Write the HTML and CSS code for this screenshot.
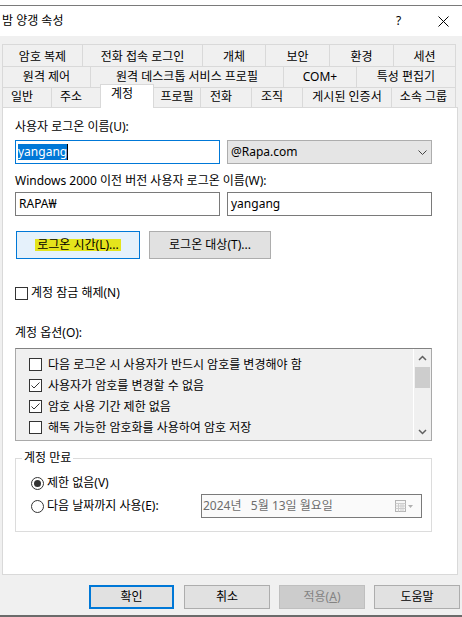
FILE: index.html
```html
<!DOCTYPE html>
<html lang="ko">
<head>
<meta charset="utf-8">
<title>밤 양갱 속성</title>
<link rel="stylesheet" href="styles.css">
</head>
<body>
<div class="win">
  <div class="topstrip"></div>
  <div class="titlebar">
    <span class="title">밤 양갱 속성</span>
    <span class="help">?</span>
    <span class="close"><svg width="11" height="11" viewBox="0 0 11 11"><path d="M0.5 0.5 L10.5 10.5 M10.5 0.5 L0.5 10.5" stroke="#000" stroke-width="1" fill="none"/></svg></span>
  </div>
  <div class="client">
    <div class="tabs">
      <div class="tabrow r1">
        <div class="tab">암호 복제</div><div class="tab">전화 접속 로그인</div><div class="tab">개체</div><div class="tab">보안</div><div class="tab">환경</div><div class="tab">세션</div>
      </div>
      <div class="tabrow r2">
        <div class="tab">원격 제어</div><div class="tab">원격 데스크톱 서비스 프로필</div><div class="tab">COM+</div><div class="tab">특성 편집기</div>
      </div>
      <div class="tabrow r3">
        <div class="tab sh">일반</div><div class="tab sh">주소</div><div class="tab sel sh">계정</div><div class="tab">프로필</div><div class="tab sh">전화</div><div class="tab sh">조직</div><div class="tab">게시된 인증서</div><div class="tab">소속 그룹</div>
      </div>
    </div>
    <div class="page">
      <div class="lbl">사용자 로그온 이름(U):</div>
      <div class="frow fa">
        <div class="field focus"><span class="seltext">yangang</span><span class="caret"></span></div>
        <div class="combo"><span>@Rapa.com</span><svg width="9" height="5" viewBox="0 0 9 5"><path d="M0.5 0.5 L4.5 4.5 L8.5 0.5" fill="none" stroke="#444" stroke-width="1"/></svg></div>
      </div>
      <div class="lbl l2">Windows 2000 이전 버전 사용자 로그온 이름(W):</div>
      <div class="frow fb">
        <div class="field">RAPA₩</div>
        <div class="field">yangang</div>
      </div>
      <div class="brow">
        <div class="btn hot w1"><span class="mark">로그온 시간(L)...</span></div>
        <div class="btn">로그온 대상(T)...</div>
      </div>
      <div class="chkrow"><span class="cb"></span><span>계정 잠금 해제(N)</span></div>
      <div class="lbl l3">계정 옵션(O):</div>
      <div class="listbox">
        <div class="items">
          <div class="item"><span class="cb"></span><span>다음 로그온 시 사용자가 반드시 암호를 변경해야 함</span></div>
          <div class="item"><span class="cb"><svg width="11" height="11" viewBox="0 0 11 11"><path d="M1.5 5.5 L4 8 L9.5 2.5" fill="none" stroke="#333" stroke-width="1"/></svg></span><span>사용자가 암호를 변경할 수 없음</span></div>
          <div class="item"><span class="cb"><svg width="11" height="11" viewBox="0 0 11 11"><path d="M1.5 5.5 L4 8 L9.5 2.5" fill="none" stroke="#333" stroke-width="1"/></svg></span><span>암호 사용 기간 제한 없음</span></div>
          <div class="item"><span class="cb"></span><span>해독 가능한 암호화를 사용하여 암호 저장</span></div>
        </div>
        <div class="vscroll">
          <span class="arr"><svg width="9" height="6" viewBox="0 0 9 6"><path d="M1 5 L4.5 1.5 L8 5" fill="none" stroke="#606060" stroke-width="1.5"/></svg></span>
          <span class="thumb"></span>
          <span class="arr dn"><svg width="9" height="6" viewBox="0 0 9 6"><path d="M1 1 L4.5 4.5 L8 1" fill="none" stroke="#606060" stroke-width="1.5"/></svg></span>
        </div>
      </div>
      <fieldset class="group">
        <legend>계정 만료</legend>
        <div class="ginner">
          <div class="radrow"><span class="rb on"></span><span>제한 없음(V)</span></div>
          <div class="radrow two"><span class="rb"></span><span>다음 날짜까지 사용(E):</span>
            <div class="dtp"><span class="dtext">2024년   5월 13일 월요일</span><svg class="cal" width="19" height="12" viewBox="0 0 19 12"><rect x="0.5" y="0.5" width="10" height="11" fill="#f6f6f6" stroke="#b4b4b4"/><path d="M0.5 3.5 H10.5 M0.5 6 H10.5 M0.5 8.5 H10.5 M3.5 3.5 V11.5 M6 3.5 V11.5 M8 3.5 V11.5" stroke="#cdcdcd" fill="none"/><path d="M13 5 L18 5 L15.5 8 Z" fill="#b0b0b0"/></svg></div>
          </div>
        </div>
      </fieldset>
    </div>
    <div class="btnbar">
      <div class="bbtn def">확인</div>
      <div class="bbtn">취소</div>
      <div class="bbtn dis">적용(<u>A</u>)</div>
      <div class="bbtn">도움말</div>
    </div>
  </div>
</div>
</body>
</html>
```
FILE: styles.css
```css
* { box-sizing: border-box; }
body {
  margin: 0;
  background: #fff;
  font-family: "Noto Sans", "Noto Sans CJK KR", sans-serif;
  font-size: 12px;
  line-height: 16px;
  color: #000;
}
.win {
  width: 462px;
  height: 617px;
  display: flex;
  flex-direction: column;
  overflow: hidden;
}
.topstrip {
  height: 6px;
  background: #fff;
  border-bottom: 1px solid #7a7a7a;
}
.titlebar {
  height: 30px;
  display: flex;
  align-items: center;
  padding-left: 2px;
  background: #fff;
}
.title { flex: 1; }
.help { width: 7px; margin-right: 35px; }
.close { width: 11px; margin-right: 13px; display: flex; }
.client {
  flex: 1;
  background: #f0f0f0;
  padding: 8px 0 0 2px;
  border-bottom: 2px solid #6b6b6b;
}
.tabrow { display: grid; }
.r1 { height: 22px; grid-template-columns: 80px 120px 63px 64px 64px 63px; }
.r2 { height: 21px; grid-template-columns: 88px 193px 73px 100px; }
.r3 { height: 20px; grid-template-rows: 20px; grid-template-columns: 49px 49px 53px 47px 51px 51px 89px 65px; }
.tab {
  border-top: 1px solid #d9d9d9;
  border-left: 1px solid #d9d9d9;
  text-align: center;
  white-space: nowrap;
}
.tab:last-child { border-right: 1px solid #d9d9d9; }
.r1 .tab { padding-top: 4px; }
.r2 .tab { padding-top: 2px; }
.r3 .tab { padding-top: 1px; }
.tab.sh { padding-right: 10px; }
.tab.sel {
  position: relative;
  z-index: 1;
  width: 54px;
  height: 24px;
  margin-top: -3px;
  background: #fff;
  border-right: 1px solid #d9d9d9;
}
.page {
  width: 456px;
  height: 468px;
  background: #fff;
  border: 1px solid #d9d9d9;
  padding: 11px 0 0 12px;
}
.lbl { height: 16px; white-space: nowrap; }
.l2 { margin-top: 9px; }
.l3 { margin-top: 24px; }
.frow { display: flex; gap: 7px; }
.fa { margin-top: 5px; }
.fb { margin-top: 3px; }
.field {
  width: 205px;
  height: 24px;
  border: 1px solid #7a7a7a;
  background: #fff;
  padding-left: 3px;
  display: flex;
  align-items: center;
}
.field.focus { border-color: #0078d7; padding-left: 2px; }
.seltext {
  display: inline-block;
  height: 16px;
  line-height: 16px;
  background: #0078d7;
  color: #fff;
}
.caret { width: 1px; height: 16px; background: #000; }
.combo {
  width: 205px;
  height: 24px;
  border: 1px solid #adadad;
  background: #e5e5e5;
  padding: 0 4px 0 3px;
  display: flex;
  align-items: center;
  justify-content: space-between;
}
.brow { display: flex; gap: 9px; margin-top: 15px; padding-left: 1px; }
.btn {
  width: 122px;
  height: 28px;
  border: 1px solid #adadad;
  background: #e1e1e1;
  display: flex;
  align-items: center;
  justify-content: center;
  white-space: nowrap;
}
.btn.w1 { width: 124px; }
.btn.hot { background: #e5f1fb; border-color: #0078d7; }
.mark {
  display: inline-block;
  height: 12px;
  line-height: 12px;
  padding: 0 2px;
  background: #e4e41c;
}
.chkrow {
  margin-top: 26px;
  height: 16px;
  display: flex;
  align-items: center;
  gap: 3px;
}
.cb {
  width: 13px;
  height: 13px;
  flex: none;
  border: 1px solid #333;
  background: #fff;
  display: inline-flex;
}
.listbox {
  margin-top: 7px;
  width: 417px;
  height: 93px;
  border: 1px solid #a9a9a9;
  border-top-color: #828282;
  background: #f0f0f0;
  display: flex;
}
.items {
  flex: 1;
  padding-top: 5px;
  border-right: 1px solid #fff;
}
.item {
  height: 21px;
  display: flex;
  align-items: center;
  gap: 6px;
  padding-left: 13px;
  white-space: nowrap;
}
.vscroll {
  width: 17px;
  display: flex;
  flex-direction: column;
  align-items: center;
}
.arr {
  width: 17px;
  height: 17px;
  display: flex;
  align-items: center;
  justify-content: center;
}
.arr.dn { margin-top: auto; }
.thumb {
  width: 15px;
  height: 21px;
  margin-top: 1px;
  background: #cdcdcd;
}
.group {
  margin: 9px 0 0;
  padding: 0;
  width: 417px;
  min-width: 0;
  border: 1px solid #dcdcdc;
}
.group legend {
  margin-left: 6px;
  padding: 0 2px;
  line-height: 16px;
}
.ginner { padding: 9px 9px 13px 15px; }
.radrow {
  height: 16px;
  display: flex;
  align-items: center;
  gap: 3px;
  white-space: nowrap;
}
.radrow.two { height: 24px; margin-top: 3px; }
.rb {
  width: 13px;
  height: 13px;
  flex: none;
  border: 1px solid #333;
  border-radius: 50%;
  background: #fff;
  display: inline-flex;
  align-items: center;
  justify-content: center;
}
.rb.on::after {
  content: "";
  width: 7px;
  height: 7px;
  border-radius: 50%;
  background: #333;
}
.dtp {
  margin-left: auto;
  width: 221px;
  height: 24px;
  border: 1px solid #7a7a7a;
  background: #fafafa;
  color: #6d6d6d;
  padding: 0 7px 0 1px;
  display: flex;
  align-items: center;
  justify-content: space-between;
}
.dtext { white-space: pre; }
.btnbar {
  display: flex;
  justify-content: flex-end;
  gap: 9px;
  margin-top: 10px;
  padding-right: 2px;
}
.bbtn {
  width: 86px;
  height: 24px;
  border: 1px solid #adadad;
  background: #e1e1e1;
  display: flex;
  align-items: center;
  justify-content: center;
}
.bbtn.def { width: 85px; margin-right: 1px; border: 2px solid #0078d7; }
.bbtn.dis { background: #cccccc; border-color: #bfbfbf; color: #838383; }
```
